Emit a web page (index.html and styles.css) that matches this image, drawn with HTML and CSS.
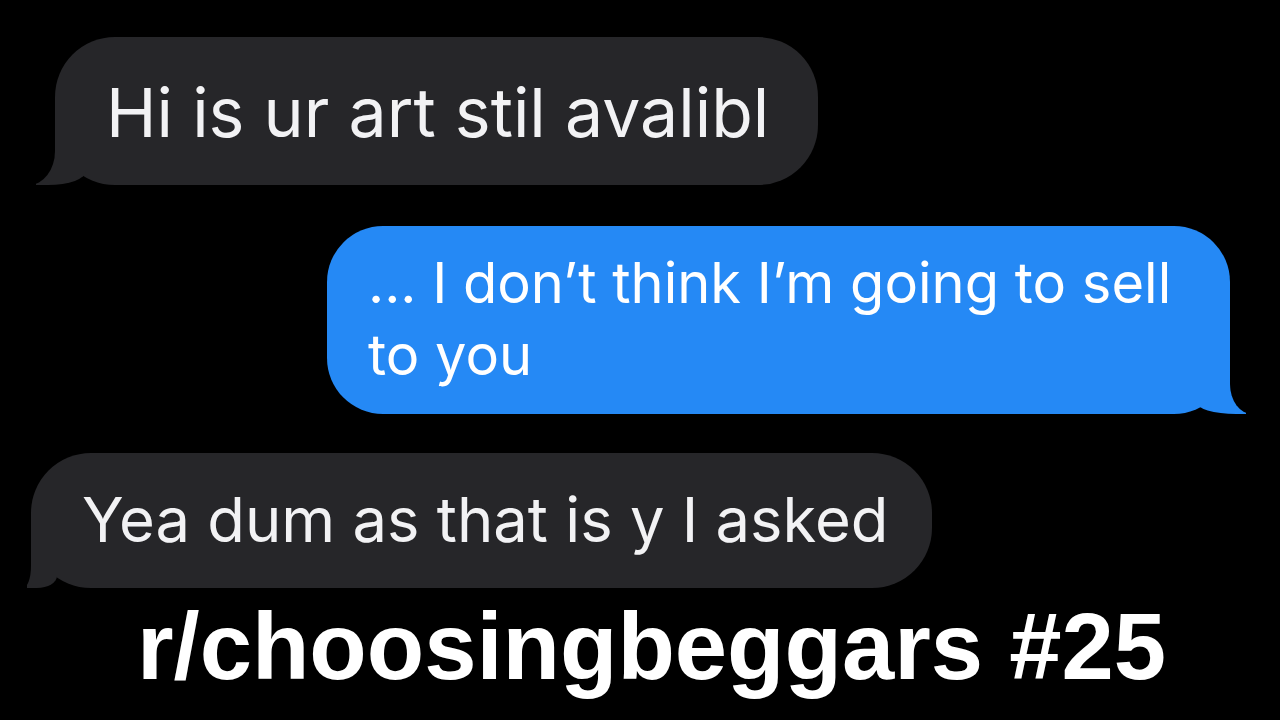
FILE: index.html
```html
<!DOCTYPE html>
<html lang="en">
<head>
  <meta charset="UTF-8">
  <meta name="viewport" content="width=device-width, initial-scale=1.0">
  <title>r/choosingbeggars #25</title>
  <link rel="stylesheet" href="styles.css">
</head>
<body>
  <div class="chat">
    <div class="bubble from first">Hi is ur art stil avalibl</div>
    <div class="bubble to">... I don’t think I’m going to sell<br>to you</div>
    <div class="bubble from last">Yea dum as that is y I asked</div>
  </div>
  <h1 class="caption">r/choosingbeggars #25</h1>
</body>
</html>
```

FILE: styles.css
```css
body {
  margin: 0;
  background: #000;
  width: 1280px;
  height: 720px;
  overflow: hidden;
  font-family: 'Inter', 'Liberation Sans', sans-serif;
}

.chat {
  display: flex;
  flex-direction: column;
  padding-top: 37px;
}

.bubble {
  position: relative;
  box-sizing: border-box;
  color: #f2f2f4;
  border-radius: 60px;
  white-space: nowrap;
}

.from {
  background: #262629;
  align-self: flex-start;
}

.first {
  margin-left: 55px;
  width: 763px;
  height: 148px;
  padding: 35px 0 0 51px;
  font-size: 68px;
  line-height: 80px;
}

.last {
  margin-left: 31px;
  margin-top: 39px;
  width: 901px;
  height: 135px;
  padding: 31px 0 0 51px;
  font-size: 61.5px;
  line-height: 72px;
}

.to {
  background: #2589f5;
  color: #fff;
  align-self: flex-start;
  margin-left: 327px;
  margin-top: 41px;
  width: 903px;
  height: 188px;
  padding: 21px 0 0 41px;
  border-radius: 56px;
  font-size: 56px;
  line-height: 72px;
}

/* tails */
.from::before,
.to::before {
  content: "";
  position: absolute;
  bottom: 0;
  height: 60px;
  width: 50px;
}

.from::after,
.to::after {
  content: "";
  position: absolute;
  bottom: 0;
  height: 60px;
  width: 60px;
  background: #000;
}

.from::before {
  left: -19px;
  background: #262629;
  border-bottom-right-radius: 38px 14px;
}

.from::after {
  left: -60px;
  border-bottom-right-radius: 26px 34px;
}

.last::before {
  left: -4px;
  width: 30px;
  border-bottom-right-radius: 20px 12px;
}

.last::after {
  border-bottom-right-radius: 8px 22px;
}

.to::before {
  right: -16px;
  background: #2589f5;
  border-bottom-left-radius: 40px 12px;
}

.to::after {
  right: -60px;
  border-bottom-left-radius: 22px 30px;
}

.caption {
  margin: 9px 0 0 0;
  padding-left: 23px;
  text-align: center;
  color: #fff;
  font-family: 'Liberation Sans', Arial, sans-serif;
  font-weight: 700;
  font-size: 94px;
  line-height: 100px;
}
```
